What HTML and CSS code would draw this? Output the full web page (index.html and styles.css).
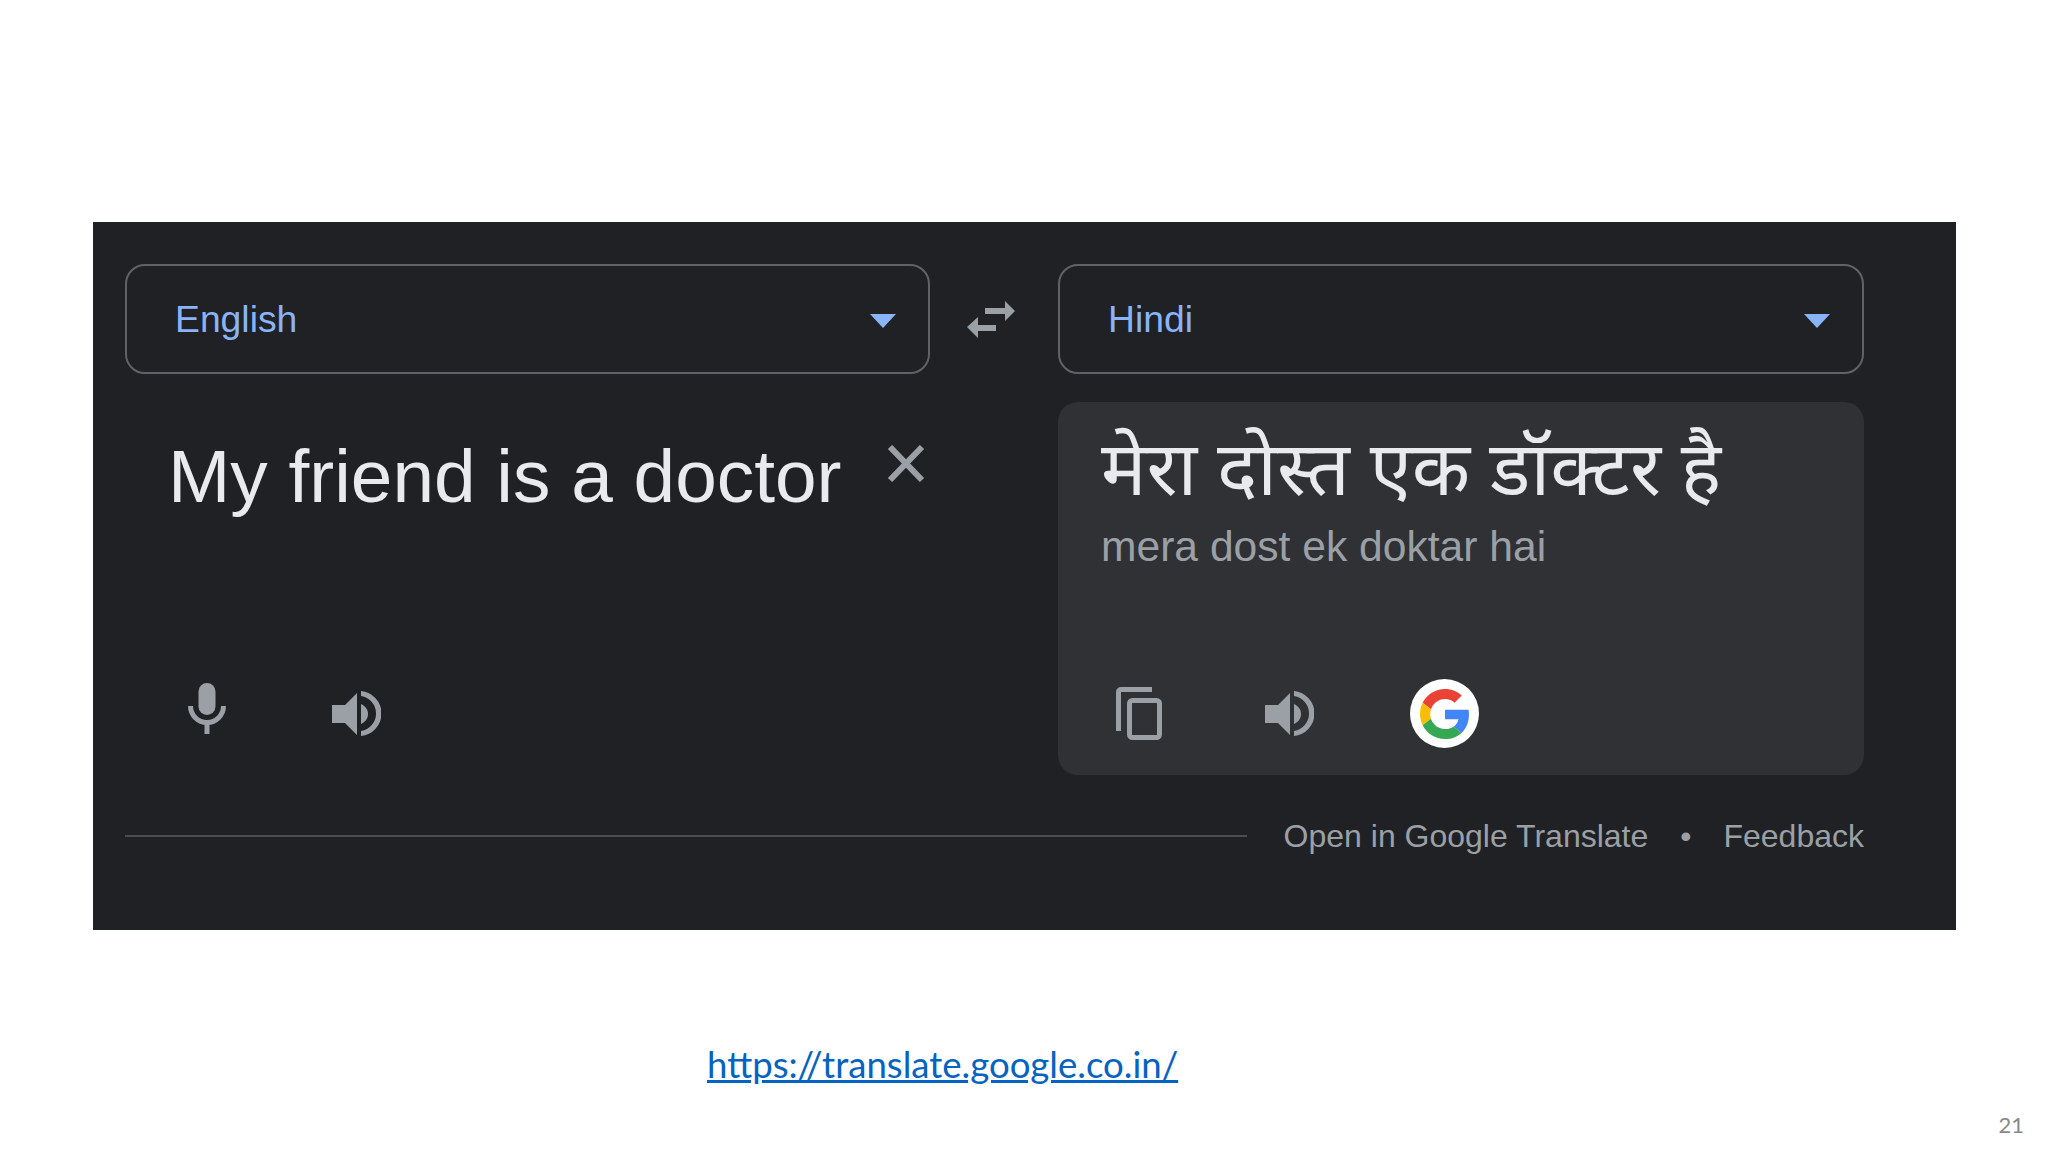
FILE: index.html
```html
<!DOCTYPE html>
<html>
<head>
    <title>Google Translate</title>
    <link rel="stylesheet" href="styles.css">
</head>
<body>
    <div class="slide">
        <div class="panel">
            <div class="translate-grid">
                <div class="lang-select">
                    <span>English</span>
                    <svg class="caret" viewBox="0 0 26 14"><path d="M0 0h26L13 14z"/></svg>
                </div>
                <div class="swap">
                    <svg class="swap-icon" viewBox="0 0 48 37"><path d="M18 7h20V0l10 10-10 10v-7H18z"/><path d="M29 24H11v-8L0 26l11 11v-7h18z"/></svg>
                </div>
                <div class="lang-select">
                    <span>Hindi</span>
                    <svg class="caret" viewBox="0 0 26 14"><path d="M0 0h26L13 14z"/></svg>
                </div>

                <div class="pane source-pane">
                    <div class="source-top">
                        <div class="source-text">My friend is a doctor</div>
                        <svg class="clear-icon" viewBox="0 0 38 37"><path d="M3 2l32 33M35 2L3 35"/></svg>
                    </div>
                    <div class="actions source-actions">
                        <svg class="mic-icon" viewBox="0 0 38 51">
                            <rect x="10.5" y="0" width="17" height="32" rx="8.5"/>
                            <path class="mic-arc" d="M2.5 23A16.5 16.5 0 0 0 35.500 23"/>
                            <rect x="16.500" y="38" width="5" height="13"/>
                        </svg>
                        <svg class="speaker-icon" viewBox="0 0 49 47">
                            <path d="M0 15h13L25 3v42L13 33H0z"/>
                            <path d="M29 14C33 16 36 19 36 24S33 32 29 34z"/>
                            <path d="M29 1A22.600 22.600 0 0 1 29 46V41A17.700 17.700 0 0 0 29 6z"/>
                        </svg>
                    </div>
                </div>
                <div></div>
                <div class="pane result-pane">
                    <div class="result-text">मेरा दोस्त एक डॉक्टर है</div>
                    <div class="result-roman">mera dost ek doktar hai</div>
                    <div class="actions result-actions">
                        <svg class="copy-icon" viewBox="0 0 46 53">
                            <path d="M36 0H5a5 5 0 0 0-5 5V44h5V5h31z"/>
                            <rect class="copy-front" x="13.500" y="13.500" width="30" height="37" rx="3"/>
                        </svg>
                        <svg class="speaker-icon" viewBox="0 0 49 47">
                            <path d="M0 15h13L25 3v42L13 33H0z"/>
                            <path d="M29 14C33 16 36 19 36 24S33 32 29 34z"/>
                            <path d="M29 1A22.600 22.600 0 0 1 29 46V41A17.700 17.700 0 0 0 29 6z"/>
                        </svg>
                        <div class="google-badge">
                            <svg class="google-icon" viewBox="0 0 48 48">
                                <path fill="#EA4335" d="M24 9.500c3.540 0 6.710 1.220 9.210 3.600l6.850-6.850C35.900 2.380 30.470 0 24 0 14.620 0 6.510 5.380 2.560 13.220l7.980 6.190C12.430 13.720 17.740 9.500 24 9.500z"/>
                                <path fill="#4285F4" d="M46.980 24.550c0-1.570-.15-3.090-.38-4.550H24v9.020h12.940c-.58 2.960-2.260 5.480-4.780 7.180l7.730 6c4.510-4.180 7.090-10.360 7.090-17.650z"/>
                                <path fill="#FBBC05" d="M10.530 28.590c-.48-1.450-.76-2.990-.76-4.590s.27-3.140.76-4.590l-7.980-6.190C.92 16.460 0 20.120 0 24c0 3.880.92 7.540 2.560 10.780l7.970-6.190z"/>
                                <path fill="#34A853" d="M24 48c6.480 0 11.930-2.130 15.890-5.810l-7.730-6c-2.150 1.450-4.920 2.300-8.160 2.300-6.260 0-11.570-4.220-13.470-9.910l-7.980 6.190C6.510 42.620 14.620 48 24 48z"/>
                            </svg>
                        </div>
                    </div>
                </div>
            </div>
            <div class="panel-footer">
                <div class="footer-line"></div>
                <span>Open in Google Translate</span>
                <span class="footer-dot">•</span>
                <span>Feedback</span>
            </div>
        </div>
        <div class="link-row">
            <a class="source-link" href="https://translate.google.co.in/">https://translate.google.co.in/</a>
        </div>
        <div class="page-number">21</div>
    </div>
</body>
</html>
```

FILE: styles.css
```css
body {
    margin: 0;
    background: #fff;
    font-family: "Liberation Sans", Arial, sans-serif;
}
.slide {
    width: 2048px;
    height: 1152px;
    padding-top: 222px;
    box-sizing: border-box;
    overflow: hidden;
}
.panel {
    width: 1863px;
    height: 708px;
    margin-left: 93px;
    padding: 42px 0 0 32px;
    box-sizing: border-box;
    background: #202124;
}
.translate-grid {
    display: grid;
    grid-template-columns: 805px 128px 806px;
    grid-template-rows: 110px 373px;
    row-gap: 28px;
}
.lang-select {
    display: flex;
    align-items: center;
    justify-content: space-between;
    padding: 0 32px 0 48px;
    border: 2px solid #5f6368;
    border-radius: 20px;
    color: #8ab4f8;
    font-size: 37.3px;
}
.caret {
    width: 26px;
    height: 14px;
    margin-top: 4px;
    fill: #8ab4f8;
}
.swap {
    display: flex;
    align-items: center;
    justify-content: center;
}
.swap-icon {
    width: 48px;
    height: 37px;
    margin-right: 6px;
    fill: #9aa0a6;
}
.pane {
    display: flex;
    flex-direction: column;
}
.result-pane {
    background: #303134;
    border-radius: 20px;
}
.source-top {
    display: flex;
    align-items: flex-start;
    padding-left: 43px;
}
.source-text {
    width: 719px;
    margin-top: 26px;
    color: #e8eaed;
    font-size: 74.8px;
    line-height: 96px;
    white-space: nowrap;
}
.clear-icon {
    width: 38px;
    height: 37px;
    margin-top: 43px;
    fill: none;
    stroke: #9aa0a6;
    stroke-width: 6;
}
.result-text {
    padding: 16px 0 0 43px;
    color: #e8eaed;
    font-family: "Noto Sans", "Liberation Sans", sans-serif;
    font-size: 76px;
    line-height: 96px;
    white-space: nowrap;
}
.result-roman {
    padding: 4px 0 0 43px;
    color: #9aa0a6;
    font-size: 42.6px;
    line-height: 56px;
    white-space: nowrap;
}
.actions {
    display: flex;
    align-items: center;
    height: 69px;
    margin-top: auto;
    margin-bottom: 27px;
}
.source-actions {
    padding-left: 63px;
    gap: 106px;
}
.result-actions {
    padding-left: 58px;
    gap: 103px;
}
.mic-icon {
    width: 38px;
    height: 51px;
    margin-top: -10px;
    fill: #9aa0a6;
}
.mic-arc {
    fill: none;
    stroke: #9aa0a6;
    stroke-width: 5;
}
.speaker-icon {
    width: 49px;
    height: 47px;
    fill: #9aa0a6;
}
.copy-icon {
    width: 46px;
    height: 53px;
    fill: #9aa0a6;
}
.copy-front {
    fill: none;
    stroke: #9aa0a6;
    stroke-width: 5;
}
.google-badge {
    display: flex;
    align-items: center;
    justify-content: center;
    width: 69px;
    height: 69px;
    margin-left: -7px;
    border-radius: 50%;
    background: #fff;
}
.google-icon {
    width: 50px;
    height: 50px;
}
.panel-footer {
    display: flex;
    align-items: center;
    width: 1739px;
    height: 40px;
    margin-top: 41px;
    color: #9aa0a6;
    font-size: 32px;
    white-space: nowrap;
}
.footer-line {
    flex: 1;
    height: 2px;
    margin-right: 37px;
    background: #4a4d51;
}
.footer-dot {
    margin: 0 32px;
}
.link-row {
    padding: 111px 0 0 707px;
    font-family: Lato, "Liberation Sans", sans-serif;
    font-size: 36.6px;
    line-height: 46px;
}
.source-link {
    color: #0563c1;
}
.page-number {
    margin-top: 24px;
    padding-right: 24px;
    color: #898989;
    font-family: Lato, "Liberation Sans", sans-serif;
    font-size: 22px;
    text-align: right;
}
```
